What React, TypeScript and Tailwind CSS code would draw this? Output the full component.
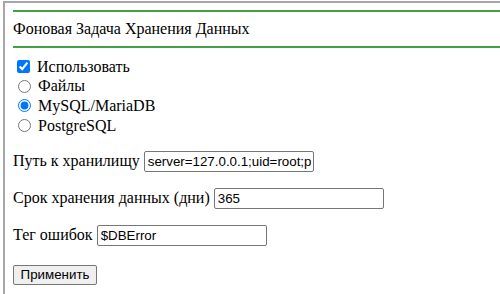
import React from "react";

const serif = "font-['Liberation_Serif','Times_New_Roman',serif]";
const sans = "font-['Liberation_Sans',Arial,sans-serif]";

function Field({ label, value }: { label: string; value: string }) {
  return (
    <div className="flex items-center gap-[4px] h-[21px] mt-[16px]">
      <span className="leading-[18px] whitespace-nowrap -mt-[1px]">{label}</span>
      <input
        type="text"
        defaultValue={value}
        className={`${sans} w-[170px] h-[21px] shrink-0 border border-[#767676] rounded-[2px] pl-[3px] pr-[2px] text-[13.33px] text-black bg-white outline-none`}
      />
    </div>
  );
}

export default function App() {
  return (
    <div className={`${serif} w-[500px] h-[294px] overflow-hidden bg-white text-[16px] text-black`}>
      <div className="ml-[3px] mt-[1px] h-[300px] border-l-2 border-t-2 border-[#a6a6a6] pl-[8px] pt-[7px]">
        <div className="border-t-2 border-b-2 border-[#43a047] py-[8px] leading-[18px]">
          Фоновая Задача Хранения Данных
        </div>
        <div className="mt-[9px]">
          <label className="flex items-center h-[19.6px]">
            <input type="checkbox" defaultChecked className="m-0 ml-[4px] mr-[7px] w-[13px] h-[13px]" />
            <span className="leading-[18px]">Использовать</span>
          </label>
          <label className="flex items-center h-[19.6px]">
            <input type="radio" name="st" className="m-0 ml-[5px] mr-[7px] w-[13px] h-[13px]" />
            <span className="leading-[18px]">Файлы</span>
          </label>
          <label className="flex items-center h-[19.6px]">
            <input type="radio" name="st" defaultChecked className="m-0 ml-[5px] mr-[7px] w-[13px] h-[13px]" />
            <span className="leading-[18px]">MySQL/MariaDB</span>
          </label>
          <label className="flex items-center h-[19.6px]">
            <input type="radio" name="st" className="m-0 ml-[5px] mr-[7px] w-[13px] h-[13px]" />
            <span className="leading-[18px]">PostgreSQL</span>
          </label>
        </div>
        <div className="mt-[3.5px]">
          <Field label="Путь к хранилищу" value="server=127.0.0.1;uid=root;pwd=;database=db" />
          <Field label="Срок хранения данных (дни)" value="365" />
          <Field label="Тег ошибок" value="$DBError" />
          <div className="mt-[15.5px]">
            <button
              type="button"
              className={`${sans} w-[84px] h-[20px] text-[13.33px] text-black bg-[#efefef] border border-[#767676] rounded-[2px] leading-[16px]`}
            >
              Применить
            </button>
          </div>
        </div>
      </div>
    </div>
  );
}
